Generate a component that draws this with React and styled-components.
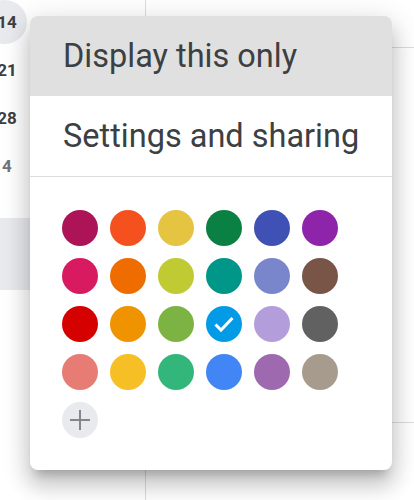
import React from 'react';
import styled, {createGlobalStyle} from 'styled-components';

const GlobalStyle = createGlobalStyle`
  body {
    margin: 0;
    background: #fff;
    font-family: Roboto, "Noto Sans", Arial, sans-serif;
  }
`;

const Page = styled.div`
  position: relative;
  width: 414px;
  height: 500px;
  overflow: hidden;
  display: flex;
  background: #fff;
`;

const Sidebar = styled.div`
  width: 145px;
  flex-shrink: 0;
  margin-top: -2px;
`;

const DateRow = styled.div`
  display: grid;
  grid-template-columns: repeat(2, 62px);
  height: 48px;
  margin-left: -24px;
  align-items: center;
`;

const DateCell = styled.div`
  position: relative;
  display: flex;
  align-items: center;
  justify-content: center;
  height: 48px;
  font-size: 17px;
  font-weight: 700;
  color: ${p => (p.muted ? '#70757a' : '#3c4043')};

  ${p => p.today && `
    &::before {
      content: '';
      position: absolute;
      left: 7px;
      top: 2px;
      width: 44px;
      height: 44px;
      border-radius: 50%;
      background: #e8eaed;
    }
  `}

  span {
    position: relative;
  }
`;

const SideItem = styled.div`
  margin-top: 28px;
  height: 72px;
  background: #e8eaed;
`;

const Main = styled.div`
  flex: 1;
  border-left: 1px solid #dadce0;
`;

const HeaderRow = styled.div`
  height: 48px;
  border-bottom: 1px solid #dadce0;
  box-sizing: border-box;
`;

const WeekRow = styled.div`
  height: 374px;
  border-bottom: 1px solid #dadce0;
`;

const Popup = styled.div`
  position: absolute;
  left: 30px;
  top: 16px;
  width: 362px;
  height: 454px;
  background: #fff;
  border-radius: 8px;
  overflow: hidden;
  box-shadow: 0 16px 20px 2px rgba(0, 0, 0, 0.14),
    0 6px 28px 4px rgba(0, 0, 0, 0.12),
    0 10px 10px -6px rgba(0, 0, 0, 0.2);
`;

const MenuItem = styled.div`
  height: 80px;
  display: flex;
  align-items: center;
  padding-left: 33px;
  font-size: 32.5px;
  color: #3c4043;
  white-space: nowrap;
  background: ${p => (p.hover ? '#e0e0e0' : 'transparent')};
`;

const Divider = styled.div`
  height: 1px;
  background: #dadce0;
`;

const Swatches = styled.div`
  display: grid;
  grid-template-columns: repeat(6, 36px);
  gap: 12px;
  padding: 33px 0 32px 32px;
`;

const Swatch = styled.div`
  width: 36px;
  height: 36px;
  border-radius: 50%;
  background: ${p => p.color};
  display: flex;
  align-items: center;
  justify-content: center;
`;

const AddButton = styled.div`
  width: 36px;
  height: 36px;
  border-radius: 50%;
  background: #e8eaed;
  display: flex;
  align-items: center;
  justify-content: center;
`;

const colors = [
  '#ad1457', '#f4511e', '#e4c441', '#0b8043', '#3f51b5', '#8e24aa',
  '#d81b60', '#ef6c00', '#c0ca33', '#009688', '#7986cb', '#795548',
  '#d50000', '#f09300', '#7cb342', '#039be5', '#b39ddb', '#616161',
  '#e67c73', '#f6bf26', '#33b679', '#4285f4', '#9e69af', '#a79b8e',
];

const selected = '#039be5';

export default function App() {
  return (
    <>
      <GlobalStyle />
      <Page>
        <Sidebar>
          <DateRow>
            <DateCell today><span>14</span></DateCell>
            <DateCell><span>15</span></DateCell>
          </DateRow>
          <DateRow><DateCell><span>21</span></DateCell></DateRow>
          <DateRow><DateCell><span>28</span></DateCell></DateRow>
          <DateRow><DateCell muted><span>4</span></DateCell></DateRow>
          <SideItem />
        </Sidebar>
        <Main>
          <HeaderRow />
          <WeekRow />
        </Main>

        <Popup>
          <MenuItem hover>Display this only</MenuItem>
          <MenuItem>Settings and sharing</MenuItem>
          <Divider />
          <Swatches>
            {colors.map(c => (
              <Swatch key={c} color={c}>
                {c === selected && (
                  <svg width="36" height="36" viewBox="0 0 36 36">
                    <polyline points="9.5,18.5 15,24 26.5,12" fill="none" stroke="#fff" strokeWidth="3" />
                  </svg>
                )}
              </Swatch>
            ))}
            <AddButton>
              <svg width="24" height="24" viewBox="0 0 24 24">
                <path d="M12 2v20M2 12h20" stroke="#80868b" strokeWidth="2" fill="none" />
              </svg>
            </AddButton>
          </Swatches>
        </Popup>
      </Page>
    </>
  );
}
